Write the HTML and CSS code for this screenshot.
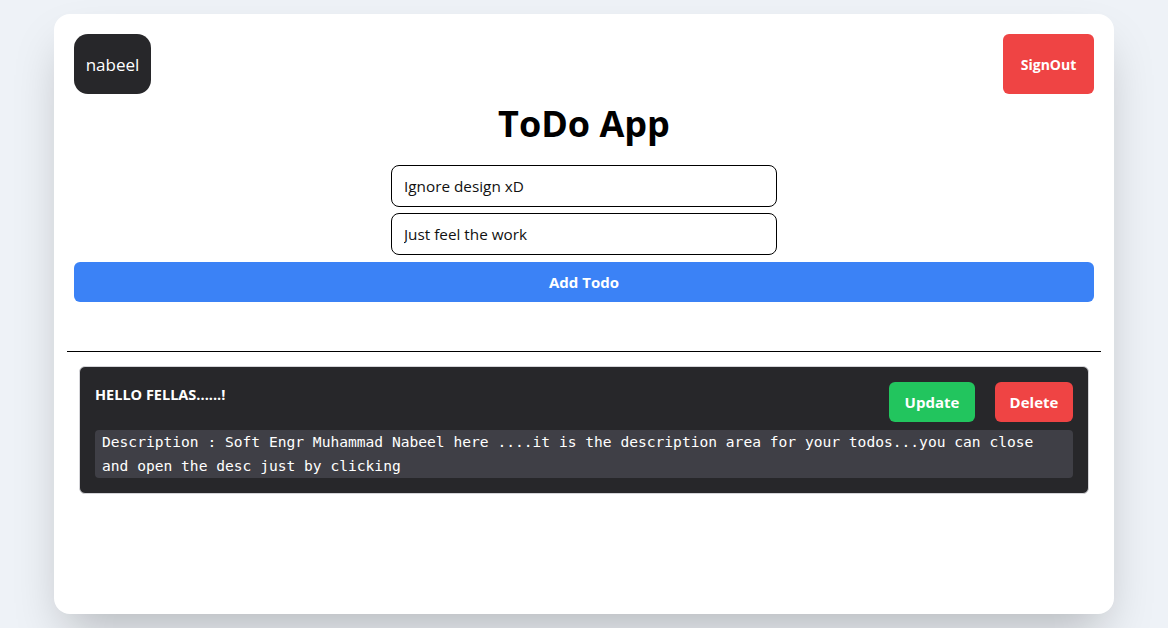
FILE: index.html
```html
<!DOCTYPE html>
<html>
<head>
<meta charset="utf-8">
<link rel="stylesheet" href="styles.css">
</head>
<body>
<main class="card">
  <header class="top">
    <button class="user">nabeel</button>
    <button class="signout">SignOut</button>
  </header>
  <h1 class="title">ToDo App</h1>
  <div class="form">
    <input class="field" type="text" value="Ignore design xD">
    <input class="field" type="text" value="Just feel the work">
  </div>
  <button class="add">Add Todo</button>
  <hr class="divider">
  <section class="list">
    <article class="todo">
      <div class="todo-head">
        <h2 class="todo-title">HELLO FELLAS......!</h2>
        <div class="actions">
          <button class="btn update">Update</button>
          <button class="btn delete">Delete</button>
        </div>
      </div>
      <p class="desc">Description : Soft Engr Muhammad Nabeel here ....it is the description area for your todos...you can close and open the desc just by clicking</p>
    </article>
  </section>
</main>
</body>
</html>
```
FILE: styles.css
```css
* { box-sizing: border-box; }
html, body { margin: 0; padding: 0; }
body {
  background: #eef2f7;
  font-family: "Open Sans", "Noto Sans", sans-serif;
  padding: 14px 54px;
}
.card {
  background: #fff;
  border-radius: 16px;
  height: 600px;
  padding: 20px;
  box-shadow: 0 25px 50px -12px rgba(0,0,0,0.25);
}
button { font-family: inherit; border: none; cursor: pointer; }
.top {
  display: flex;
  justify-content: space-between;
  align-items: center;
}
.user {
  height: 60px;
  width: 77px;
  background: #27272a;
  color: #fff;
  font-size: 17px;
  border-radius: 14px;
  padding: 0;
}
.signout {
  height: 60px;
  width: 91px;
  background: #ef4444;
  color: #fff;
  font-weight: 700;
  font-size: 14px;
  border-radius: 6px;
  padding: 0;
}
.title {
  margin: 9px 0 20px;
  text-align: center;
  font-size: 36px;
  line-height: 42px;
  font-weight: 700;
  color: #000;
}
.form {
  display: flex;
  flex-direction: column;
  align-items: center;
  gap: 6px;
}
.field {
  width: 386px;
  height: 42px;
  border: 1px solid #000;
  border-radius: 8px;
  padding: 0 12px;
  font-family: inherit;
  font-size: 15.3px;
  color: #111;
}
.add {
  display: block;
  width: 100%;
  height: 40px;
  margin-top: 7px;
  background: #3b82f6;
  color: #fff;
  font-weight: 700;
  font-size: 15px;
  border-radius: 6px;
}
.divider {
  margin: 49px -7px 14px;
  border: none;
  border-top: 1px solid #000;
  height: 0;
}
.list { padding: 0 5px; }
.todo {
  background: #27272a;
  border: 1px solid #d4d4d8;
  border-radius: 6px;
  padding: 15px 15px 15px;
}
.todo-head {
  display: flex;
  justify-content: space-between;
  align-items: flex-start;
}
.todo-title {
  margin: 3px 0 0;
  color: #fff;
  font-size: 14.5px;
  line-height: 20px;
  font-weight: 700;
}
.actions { display: flex; gap: 20px; }
.btn {
  height: 40px;
  color: #fff;
  font-weight: 700;
  font-size: 15px;
  border-radius: 6px;
  padding: 0;
}
.update { background: #22c55e; width: 86px; }
.delete { background: #ef4444; width: 78px; }
.desc {
  margin: 8px 0 0;
  background: #3f3f46;
  border-radius: 4px;
  padding: 0 7px;
  color: #fff;
  font-family: "DejaVu Sans Mono", "Liberation Mono", monospace;
  font-size: 14.6px;
  line-height: 24px;
}
```
